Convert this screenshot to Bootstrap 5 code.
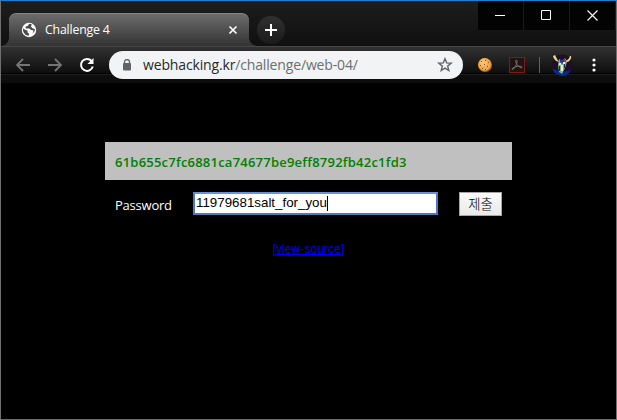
<!DOCTYPE html>
<html lang="ko">
<head>
<meta charset="utf-8">
<title>Challenge 4</title>
<meta name="viewport" content="width=device-width, initial-scale=1">
<link href="https://cdn.jsdelivr.net/npm/bootstrap@5.3.0/dist/css/bootstrap.min.css" rel="stylesheet">
<style>
body{background:#000;font-family:"Open Sans","Noto Sans","Noto Sans CJK KR",sans-serif;color:#fff}
svg{display:block;flex:none}
.window{width:617px;height:420px;border:1px solid #707070;border-top-color:#1a80d2;background:#000}
.strip{height:45px;background:linear-gradient(#1d1d1d,#101010);padding-left:8px}
.tab{width:240px;height:33px;margin-top:12px;border-radius:7px 7px 0 0;background:linear-gradient(#6c6c6c,#333);border-top:1px solid #858585;padding:0 11px 0 12px}
.tab::before,.tab::after{content:"";position:absolute;bottom:0;width:8px;height:8px}
.tab::before{left:-8px;background:radial-gradient(circle at 0 0,transparent 7.5px,#373737 8px)}
.tab::after{right:-8px;background:radial-gradient(circle at 100% 0,transparent 7.5px,#373737 8px)}
.tab-title{font-size:12.3px;line-height:16px;margin-left:8px;letter-spacing:-.17px}
.new-tab{width:28px;height:28px;margin:15px 0 0 8px;background:linear-gradient(#303030,#1b1b1b)}
.caption{height:29px;gap:1px;background:#1b1b1b;padding-right:1px}
.caption span{width:45px;height:29px;background:#030303}
.toolbar{height:37px;padding-left:15px;background:linear-gradient(#333 0,#303030 2px,#0e0e0e 27px,#000 27px,#000 28px,#202020 28px,#1d1d1d 29px,#0e0e0e 29px,#0c0c0c)}
.toolbar-line{box-shadow:inset 0 1px #464646}
.address{width:354px;height:28px;margin-left:14px;padding:0 10px 0 13px;background:#f1f3f4;color:#27292c;font-size:14px;line-height:28px}
.url{margin-left:11px;letter-spacing:-.15px;white-space:nowrap}
.url span{color:#6b6e72}
.divider{width:1px;height:16px;background:#606060}
.challenge{width:407px;margin:59px auto 0 104px;font-size:13px}
.hash{height:38px;background:silver;color:green;padding-left:10px;line-height:40px;font-weight:600;letter-spacing:.225px;white-space:nowrap}
.entry{height:47px;padding:0 10px}
.entry label{width:78px;letter-spacing:-.22px;padding-top:4px}
.field{width:245px;height:23px;border:2px solid #4b79c4;border-top-color:#6c91cf;background:#fff;color:#000;font:13.33px/18px "Liberation Sans",Arial,sans-serif;padding-left:1px;white-space:nowrap}
.caret{width:1px;height:15px;background:#000;margin-top:2px}
.submit{width:43px;height:24px;border:1px solid #a5a5a5;background:linear-gradient(#fafafa,#e9e9e9);font:300 13.33px/22px "Noto Sans CJK KR",sans-serif;color:#000}
.source{margin-top:13px;font:12px/18px "Liberation Sans",Arial,sans-serif;letter-spacing:.08px}
.source a{color:#00e}
</style>
<script src="https://cdn.jsdelivr.net/npm/bootstrap@5.3.0/dist/js/bootstrap.bundle.min.js"></script>
</head>
<body class="overflow-hidden">
<div class="window overflow-hidden">
  <header>
    <div class="strip d-flex align-items-start">
      <div class="tab position-relative d-flex align-items-center">
        <svg width="16" height="16" viewBox="0 0 16 16"><circle cx="8" cy="8" r="7.2" fill="#fff"/><path d="M2 6.5 4.5 8l2 .6v2l1.4 1v2.1C4.700 13.600 2.200 11 2 8zM8.200 1.800 6.700 3.900l-2 .7v1.800h3.700l1.700 1.700 2.500.4-1.100 3c1.600-1 2.400-2.500 2.500-4.200l-2.500-1-1.600-1.700 1-2.100c-.8-.5-1.700-.7-2.700-.7z" fill="#4a4a4a"/></svg>
        <span class="tab-title">Challenge 4</span>
        <svg class="ms-auto" width="10" height="10" viewBox="0 0 10 10"><path d="m1.500 1.500 7 7m0-7-7 7" stroke="#fff" stroke-width="1.700"/></svg>
      </div>
      <div class="new-tab rounded-circle d-flex align-items-center justify-content-center"><svg width="12" height="12" viewBox="0 0 12 12"><path d="M6 0v12M0 6h12" stroke="#fff" stroke-width="2"/></svg></div>
      <div class="caption d-flex ms-auto">
        <span class="d-flex align-items-center justify-content-center"><svg width="11" height="11"><path d="M0 5.500h10" stroke="#fff"/></svg></span>
        <span class="d-flex align-items-center justify-content-center"><svg width="11" height="11"><path d="M.5.500h9v9h-9z" fill="none" stroke="#fff"/></svg></span>
        <span class="d-flex align-items-center justify-content-center"><svg width="11" height="11"><path d="m.5.500 10 10m0-10-10 10" stroke="#fff" stroke-width="1.100"/></svg></span>
      </div>
    </div>
    <div class="toolbar toolbar-line d-flex align-items-center">
      <svg width="15" height="14" viewBox="0 0 15 14"><path d="M14 7H1.500M7 1 1 7l6 6" fill="none" stroke="#747474" stroke-width="1.800"/></svg>
      <svg width="15" height="14" viewBox="0 0 15 14" style="margin-left:17px"><path d="M0 7h12.500M7 1l6 6-6 6" fill="none" stroke="#747474" stroke-width="1.800"/></svg>
      <svg width="16" height="16" viewBox="0 0 16 16" style="margin-left:16px"><path d="M12.600 4A6 6 0 1 0 13.800 9.500" fill="none" stroke="#fff" stroke-width="2"/><path d="M14.500 1v6h-6z" fill="#fff"/></svg>
      <div class="address rounded-pill d-flex align-items-center">
        <svg width="10" height="12" viewBox="0 0 10 12"><path d="M2.500 5V3a2.500 2.500 0 0 1 5 0v2" fill="none" stroke="#5f6368" stroke-width="1.300"/><rect x="1" y="4" width="8" height="7.500" rx="1" fill="#5f6368"/></svg>
        <div class="url">webhacking.kr<span>/challenge/web-04/</span></div>
        <svg class="ms-auto" width="16" height="16" viewBox="0 0 16 16"><path d="m8 1.700 1.700 4.200 4.500.3-3.500 2.900 1.100 4.400L8 11.100l-3.800 2.400 1.100-4.400-3.500-2.900 4.500-.3z" fill="none" stroke="#5f6368" stroke-width="1.400"/></svg>
      </div>
      <svg width="16" height="16" viewBox="0 0 16 16" style="margin-left:14px"><circle cx="8" cy="8" r="7" fill="#b9671a"/><circle cx="7.600" cy="7.400" r="6.300" fill="#edaa52"/><circle cx="6.500" cy="6" r="3.500" fill="#f6c171"/><path d="M4 4h1v1H4zM8 3h1v1H8zM11 5h1v1h-1zM3 8h1v1H3zM7 7h1v1H7zM10 9h1v1h-1zM5 11h1v1H5zM8 12h1v1H8z" fill="#935019"/></svg>
      <svg width="16" height="16" viewBox="0 0 16 16" style="margin-left:16px"><rect x=".5" y=".5" width="15" height="15" fill="#201312" stroke="#7c1c14"/><path d="M7 3.200c1.500-.5 1.300 2 .4 4.200C6.300 10.200 4 13 3.100 12.500c-.8-.8 2.500-2.800 5.200-3.200 2.700-.5 5.200.2 4.700 1.200-.9 1-4.400-1.300-5.600-4C6.500 4.600 6.400 3.500 7 3.200z" fill="none" stroke="#777" stroke-width="1"/></svg>
      <div class="divider" style="margin-left:14px"></div>
      <svg width="22" height="22" viewBox="0 0 22 22" style="margin-left:11px"><circle cx="11" cy="11" r="10.500" fill="#220e28"/><path d="m1 15 5 1 4 3 6-2 4-1q-3 6-9 6-7-1-10-7z" fill="#07298e"/><path d="m8 5 3 2 3-3 2 4-2 6-3 6-3-2-1-7z" fill="#79b391"/><path d="M2 2q1 5 6 6L6 5 4 1zM19 2q-1 4-5 5l3 1q4-3 3-6z" fill="#e7dc78"/><path d="m9 5 2 2 3-3v3l-3 3-2-2z" fill="#173da2"/><path d="M8 9h2v2H8zm4-1h2v2h-2zm-2 3h2v6h-2z" fill="#f1e9d0"/><path d="M8 12h1v5H8zm5-2h1v4h-1z" fill="#142f48"/><path d="M13 6h2v2h-2z" fill="#c32d60"/></svg>
      <svg width="4" height="14" viewBox="0 0 4 14" style="margin-left:19px"><g fill="#fff"><circle cx="2" cy="2" r="1.600"/><circle cx="2" cy="7" r="1.600"/><circle cx="2" cy="12" r="1.600"/></g></svg>
    </div>
  </header>
  <main class="challenge">
    <div class="hash">61b655c7fc6881ca74677be9eff8792fb42c1fd3</div>
    <div class="entry d-flex align-items-center">
      <label>Password</label>
      <div class="field d-flex"><span>11979681salt_for_you</span><i class="caret"></i></div>
      <button class="submit p-0 ms-auto" type="button">제출</button>
    </div>
    <div class="source text-center"><a href="#">[view-source]</a></div>
  </main>
</div>
</body>
</html>
